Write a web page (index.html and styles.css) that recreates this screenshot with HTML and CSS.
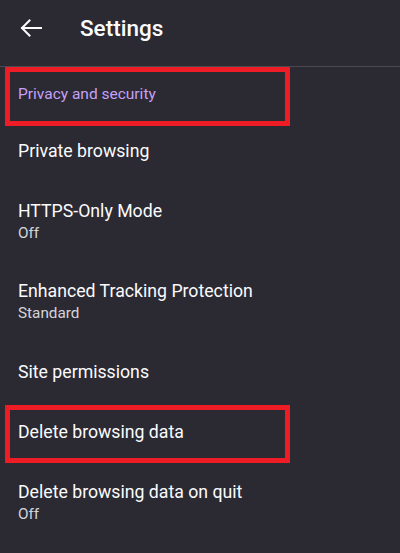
FILE: index.html
```html
<!DOCTYPE html>
<html>
<head>
<meta charset="utf-8">
<link rel="stylesheet" href="styles.css">
</head>
<body>
<div class="app">
  <header class="toolbar">
    <svg class="back" width="22" height="18" viewBox="0 0 22 18" aria-hidden="true">
      <path d="M21 9H2M9.5 1.5L2 9l7.5 7.5" fill="none" stroke="#fbfbfe" stroke-width="2" stroke-linecap="square"/>
    </svg>
    <h1 class="title">Settings</h1>
  </header>
  <div class="list">
    <div class="row category marked marked-cat">
      <span class="category-text">Privacy and security</span>
    </div>
    <div class="row single"><span class="label">Private browsing</span></div>
    <div class="row double">
      <span class="label">HTTPS-Only Mode</span>
      <span class="sub">Off</span>
    </div>
    <div class="row double dbl80">
      <span class="label">Enhanced Tracking Protection</span>
      <span class="sub">Standard</span>
    </div>
    <div class="row single"><span class="label">Site permissions</span></div>
    <div class="row single marked marked-del"><span class="label">Delete browsing data</span></div>
    <div class="row double">
      <span class="label">Delete browsing data on quit</span>
      <span class="sub">Off</span>
    </div>
  </div>
</div>
</body>
</html>
```
FILE: styles.css
```css
html, body {
  margin: 0;
  padding: 0;
  background: #2b2a33;
}
body {
  font-family: Roboto, "Noto Sans", sans-serif;
  color: #fbfbfe;
  width: 400px;
  height: 553px;
  overflow: hidden;
}
.toolbar {
  height: 66px;
  border-bottom: 1px solid #4a4950;
  display: flex;
  align-items: center;
  padding-bottom: 10px;
  box-sizing: border-box;
  height: 67px;
}
.back {
  margin-left: 20px;
}
.title {
  margin: 0 0 0 38px;
  font-size: 22.5px;
  font-weight: 500;
  line-height: 28px;
}
.list {
  display: flex;
  flex-direction: column;
}
.row {
  position: relative;
  display: flex;
  flex-direction: column;
  justify-content: center;
  padding-left: 18px;
  box-sizing: border-box;
}
.category { height: 54px; }
.single { height: 60px; }
.double { height: 81px; }
.dbl80 { height: 80px; }
.category-text {
  font-size: 15.5px;
  line-height: 22px;
  color: #c6a0f6;
}
.label {
  font-size: 17.7px;
  line-height: 22px;
  color: #fbfbfe;
}
.sub {
  font-size: 15.3px;
  line-height: 22px;
  color: #d4d4da;
}
.marked::after {
  content: "";
  position: absolute;
  left: 5px;
  width: 285px;
  border: 5px solid #ee1c25;
  box-sizing: border-box;
}
.marked-cat::after { top: 0; height: 59px; }
.marked-del::after { top: 3px; height: 58px; }
```
